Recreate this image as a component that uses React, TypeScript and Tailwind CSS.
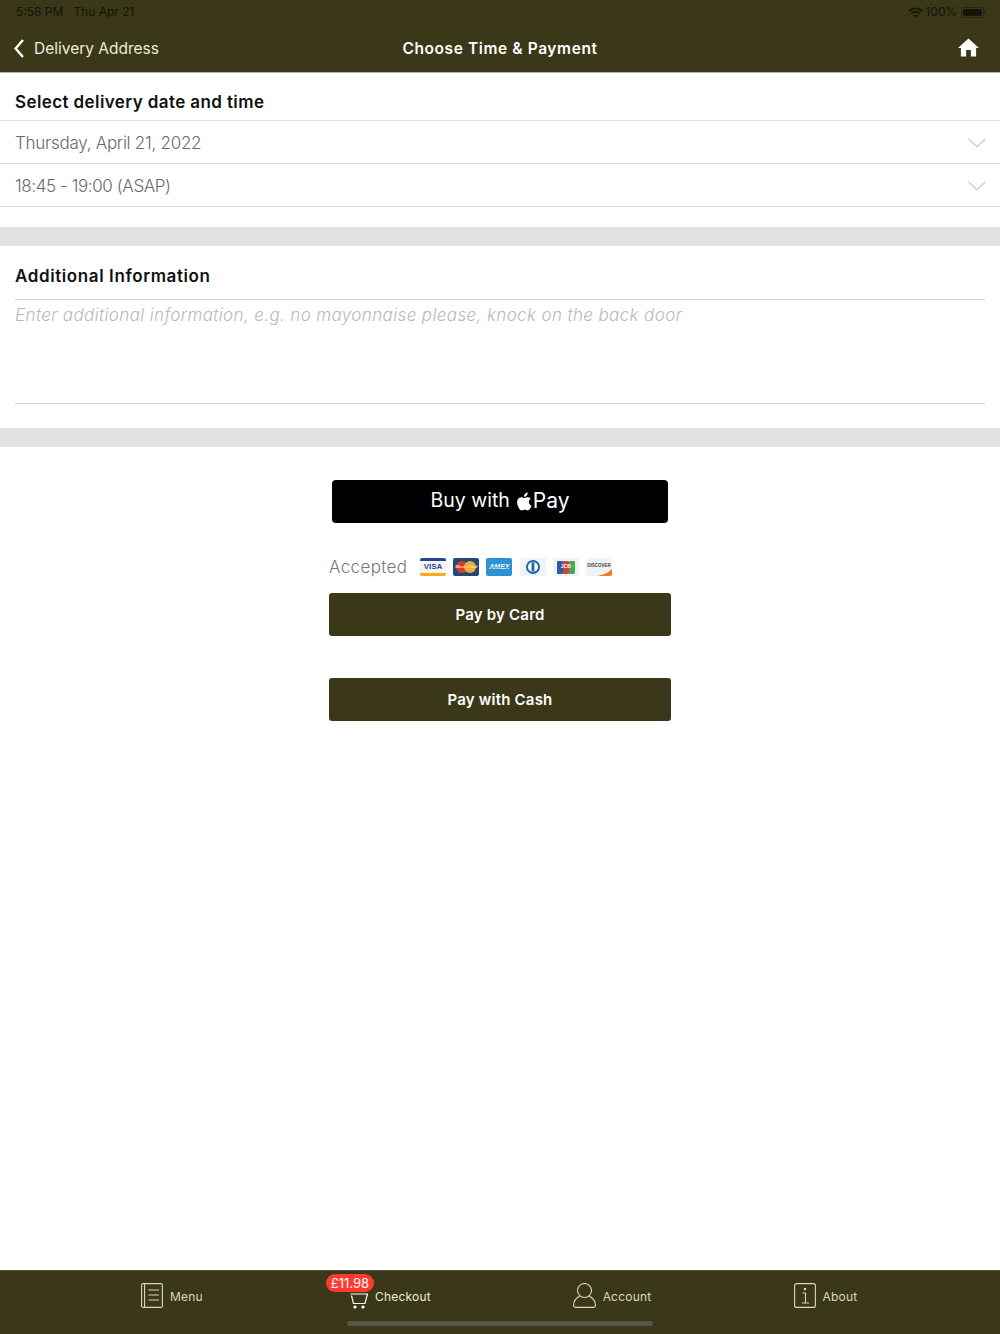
import React from 'react';

const heading = "font-['Inter',sans-serif]";

function SelectRow({ label, tracking }: { label: string; tracking: string }) {
  return (
    <div className="h-[43px] flex items-center justify-between pl-[15px] pr-[14px] border-b border-[#dcdcdc]">
      <span className={`${heading} mt-[4px] text-[17px] font-light text-[#6a6a6a] ${tracking}`}>{label}</span>
      <svg width="18" height="10" viewBox="0 0 18 10" fill="none" stroke="#c8c8c8" strokeWidth="1.2" className="mt-[1px]">
        <path d="M0.5 0.8L9 8.8L17.5 0.8" />
      </svg>
    </div>
  );
}

function CardBox({ bg, children }: { bg: string; children?: React.ReactNode }) {
  return (
    <div className={`relative w-[26px] h-[18px] rounded-[2px] overflow-hidden flex items-center justify-center ${bg}`}>
      {children}
    </div>
  );
}

function CardLogos() {
  return (
    <div className="flex gap-[7.2px]">
      <CardBox bg="bg-[#f5f5f5]">
        <div className="absolute top-0 inset-x-0 h-[3px] bg-[#24478f]" />
        <div className="absolute bottom-0 inset-x-0 h-[3px] bg-[#f5ab1c]" />
        <span className="font-['Liberation_Sans',sans-serif] text-[8px] font-bold text-[#2b4b8f]">VISA</span>
      </CardBox>
      <CardBox bg="bg-[#1f4a78]">
        <div className="w-[12px] h-[12px] rounded-full bg-[#dd3b26]" />
        <div className="w-[12px] h-[12px] rounded-full bg-[#f5a93a] -ml-[4px]" />
        <span className="absolute font-['Liberation_Sans',sans-serif] text-[4px] font-bold italic text-[#ffe3b8]">MasterCard</span>
      </CardBox>
      <CardBox bg="bg-[#2b93d1]">
        <span className="font-['Liberation_Sans',sans-serif] text-[7px] font-bold italic text-white">AMEX</span>
        <div className="absolute inset-x-[2px] top-[8.5px] h-[1px] bg-[#2b93d1]/60" />
      </CardBox>
      <CardBox bg="bg-[#f2f3f5]">
        <svg width="16" height="16" viewBox="0 0 16 16">
          <circle cx="8" cy="8" r="7" fill="#1a6aa8" />
          <circle cx="8" cy="8" r="5" fill="#fff" />
          <rect x="6.6" y="3.4" width="2.8" height="9.2" fill="#1a6aa8" />
        </svg>
      </CardBox>
      <CardBox bg="bg-[#f2f3f5]">
        <div className="flex gap-[0.5px]">
          <div className="w-[5.5px] h-[13px] rounded-[1px] bg-[#2a5ca8]" />
          <div className="w-[5.5px] h-[13px] rounded-[1px] bg-[#d5403f]" />
          <div className="w-[5.5px] h-[13px] rounded-[1px] bg-[#4aa84f]" />
        </div>
        <span className="absolute font-['Liberation_Sans',sans-serif] text-[5px] font-bold text-white">JCB</span>
      </CardBox>
      <CardBox bg="bg-[#f2f3f5]">
        <span className="font-['Liberation_Sans',sans-serif] text-[4.5px] font-bold text-[#444] -mt-[1px]">DISCOVER</span>
        <svg className="absolute right-0 bottom-0" width="15" height="7" viewBox="0 0 15 7">
          <path d="M0 7C6 6 11 4 15 0V7Z" fill="#ee7a22" />
        </svg>
      </CardBox>
    </div>
  );
}

function PayButton({ label }: { label: string }) {
  return (
    <button className={`w-[342px] h-[43px] pt-[2px] rounded-[3px] bg-[#3a3818] text-white text-[15px] font-semibold tracking-[0.2px] ${heading}`}>
      {label}
    </button>
  );
}

const tabClass = "stroke-[#d9d7bd] fill-none";

function MenuIcon() {
  return (
    <svg width="22" height="25" viewBox="0 0 22 25" className={tabClass} strokeWidth="1.1">
      <rect x="0.6" y="0.6" width="20.8" height="23.8" rx="1.5" />
      <path d="M3.6 0.6V24.4M7.5 7H18M7.5 12H18M7.5 17H18" />
    </svg>
  );
}

function CartIcon() {
  return (
    <svg width="18" height="16" viewBox="0 0 18 16" className="stroke-white fill-none" strokeWidth="1.2">
      <path d="M0.5 1H17.5L15 10.5H3.5L1.5 2.5" />
      <circle cx="5" cy="14" r="1" fill="#fff" />
      <circle cx="13" cy="14" r="1" fill="#fff" />
    </svg>
  );
}

function AccountIcon() {
  return (
    <svg width="23" height="25" viewBox="0 0 23 25" className={tabClass} strokeWidth="1.1">
      <ellipse cx="11.5" cy="7.5" rx="7" ry="7" />
      <path d="M7 13C3 15 0.6 18.5 0.6 22.2C0.6 23.6 1.6 24.4 3 24.4H20C21.4 24.4 22.4 23.6 22.4 22.2C22.4 18.5 20 15 16 13" />
    </svg>
  );
}

function AboutIcon() {
  return (
    <svg width="22" height="25" viewBox="0 0 22 25" className={tabClass} strokeWidth="1.1">
      <rect x="0.6" y="0.6" width="20.8" height="23.8" rx="2" />
      <path d="M8.5 10H11.5V20M8 20H15" />
      <circle cx="11" cy="6" r="0.7" fill="#d9d7bd" />
    </svg>
  );
}

function Tab({ icon, label, width }: { icon: React.ReactNode; label: string; width: string }) {
  return (
    <div className={`${width} flex items-center justify-center gap-[7px]`}>
      {icon}
      <span className="mt-[3px] text-[12px] tracking-[0.2px] text-[#d9d7bd]">{label}</span>
    </div>
  );
}

export default function App() {
  return (
    <div className="w-[1000px] h-[1334px] bg-white flex flex-col font-['Inter',sans-serif]">
      {/* status bar + nav */}
      <header className="h-[73px] shrink-0 bg-[#3a3818] border-b border-[#b5b4a0]">
        <div className="h-[24px] flex items-center justify-between pl-[16px] pr-[15px] text-[12px] text-[#15150a]">
          <div className="flex gap-[10px]">
            <span>5:58 PM</span>
            <span>Thu Apr 21</span>
          </div>
          <div className="flex items-center gap-[2px]">
            <svg width="15" height="11" viewBox="0 0 15 11" fill="none" stroke="#15150a" strokeWidth="1.7">
              <path d="M1 4C5 0.5 10 0.5 14 4M3.3 6.4C5.8 4.3 9.2 4.3 11.7 6.4" />
              <path d="M7.5 10.8L5.3 8.5C6.5 7.6 8.5 7.6 9.7 8.5Z" fill="#15150a" stroke="none" />
            </svg>
            <span className="tracking-[0.1px] mr-[1px]">100%</span>
            <div className="flex items-center">
              <div className="w-[23px] h-[11px] rounded-[3px] border border-[#15150a]/50 p-[1px]">
                <div className="w-full h-full rounded-[2px] bg-[#15150a]" />
              </div>
              <div className="w-[1px] h-[4px] bg-[#15150a]/50 ml-[0.5px]" />
            </div>
          </div>
        </div>
        <div className="h-[48px] flex items-center justify-between relative pl-[14px] pr-[21px]">
          <div className="flex items-center gap-[10px]">
            <svg width="10" height="19" viewBox="0 0 10 19" fill="none" stroke="#fff" strokeWidth="2.4">
              <path d="M9 1L1.6 9.5L9 18" />
            </svg>
            <span className="mt-[2px] text-[15.5px] text-[#ecebdf]">Delivery Address</span>
          </div>
          <span className="absolute inset-x-0 top-[1px] h-full flex items-center justify-center text-white text-[15.5px] font-semibold tracking-[0.6px] pointer-events-none">
            Choose Time &amp; Payment
          </span>
          <svg width="21" height="19" viewBox="0 0 22 20" fill="#fff" className="-mt-[1px]">
            <path d="M11 0.5L22 10.5H19V19.5H13.5V12.5H8.5V19.5H3V10.5H0Z" />
          </svg>
        </div>
      </header>

      {/* delivery date and time */}
      <section>
        <h2 className="h-[48px] border-b border-[#dcdcdc] flex items-center pl-[15px] pt-[15px] pb-[2px] text-[17px] font-semibold text-[#111] tracking-[0.4px]">
          Select delivery date and time
        </h2>
        <SelectRow label="Thursday, April 21, 2022" tracking="tracking-[-0.26px]" />
        <SelectRow label="18:45 - 19:00 (ASAP)" tracking="tracking-[-0.4px]" />
      </section>
      <div className="h-[20px]" />
      <div className="h-[19px] bg-[#e2e2e4]" />

      {/* additional info */}
      <section className="px-[15px]">
        <h2 className="h-[54px] border-b border-[#d4d4d4] flex items-center pt-[9px] text-[17px] font-semibold text-[#111] tracking-[0.6px]">
          Additional Information
        </h2>
        <div className="h-[104px] border-b border-[#d4d4d4] pt-[3px] text-[17px] font-light italic text-[#b9b9b9] tracking-[0.37px]">
          Enter additional information, e.g. no mayonnaise please, knock on the back door
        </div>
      </section>
      <div className="h-[24px]" />
      <div className="h-[19px] bg-[#e2e2e4]" />

      {/* payment */}
      <section className="flex-1 flex flex-col items-center pt-[33px]">
        <button className="w-[336px] h-[43px] pb-[1px] rounded-[4px] bg-black text-white flex items-center justify-center gap-[6px] text-[19.5px] font-['Inter',sans-serif]">
          <span>Buy with</span>
          <span className="flex items-center gap-[1px]">
            <svg width="16" height="19" viewBox="1 0.5 14 17" fill="#fff">
              <path d="M12.4 9.5C12.4 7.6 14 6.7 14.1 6.6C13.2 5.3 11.8 5.1 11.3 5.1C10.1 5 8.9 5.8 8.3 5.8C7.7 5.8 6.7 5.1 5.7 5.1C4.4 5.1 3.2 5.9 2.5 7C1.1 9.4 2.1 13 3.5 15C4.2 16 5 17.1 6 17C7 17 7.4 16.4 8.6 16.4C9.8 16.4 10.1 17 11.2 17C12.3 17 13 16 13.7 15C14.4 13.9 14.7 12.8 14.8 12.8C14.7 12.7 12.4 11.9 12.4 9.5ZM10.4 3.7C11 3 11.3 2 11.2 1C10.4 1 9.4 1.6 8.8 2.3C8.3 2.9 7.8 3.9 8 4.8C8.9 4.9 9.8 4.4 10.4 3.7Z" />
            </svg>
            <span className="text-[21px]">Pay</span>
          </span>
        </button>
        <div className="w-[342px] h-[70px] flex items-center pt-[29px] pb-[11px]">
          <span className="w-[91px] mt-[1px] text-[17px] font-light text-[#777] tracking-[0.35px]">Accepted</span>
          <CardLogos />
        </div>
        <PayButton label="Pay by Card" />
        <div className="h-[42px]" />
        <PayButton label="Pay with Cash" />
      </section>

      {/* tab bar */}
      <nav className="relative h-[64px] shrink-0 bg-[#3a3818] pl-[64px] pt-[12px] border-t border-[#55543a]">
        <div className="flex h-[25px]">
          <Tab icon={<MenuIcon />} label="Menu" width="w-[216px]" />
          <div className="w-[219px] pl-[2px] flex items-center justify-center gap-[7px] relative">
            <div className="mt-[10px]">
              <CartIcon />
            </div>
            <span className="mt-[3px] text-[12px] tracking-[0.2px] text-[#ecebdf]">Checkout</span>
            <span className="absolute left-[46px] -top-[9px] h-[18px] w-[48px] text-center rounded-full bg-[#ff3b30] text-white text-[13px] leading-[18px]">£11.98</span>
          </div>
          <Tab icon={<AccountIcon />} label="Account" width="w-[226px]" />
          <Tab icon={<AboutIcon />} label="About" width="w-[201px]" />
        </div>
        <div className="absolute left-[347px] bottom-[8px] w-[306px] h-[5px] rounded-full bg-[#55554a]" />
      </nav>
    </div>
  );
}
